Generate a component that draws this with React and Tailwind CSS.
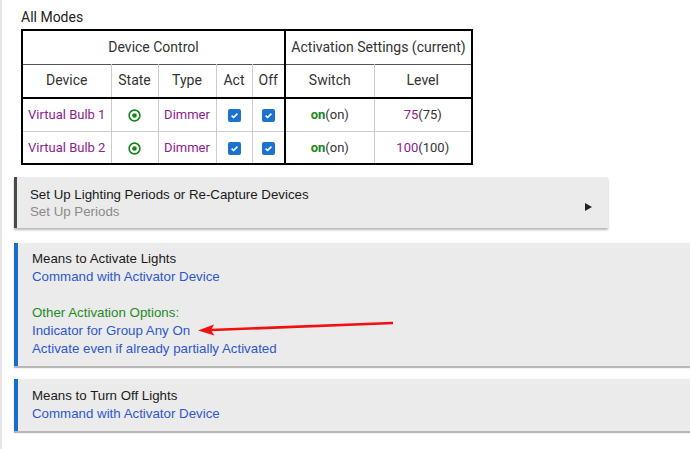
import React from "react";

const devices = [
  { name: "Virtual Bulb 1", level: "75" },
  { name: "Virtual Bulb 2", level: "100" },
];

const Radio = () => (
  <svg width="13" height="13" viewBox="0 0 13 13" className="inline-block">
    <circle cx="6.5" cy="6.5" r="5.4" fill="none" stroke="#15861a" strokeWidth="1.6" />
    <circle cx="6.5" cy="6.5" r="2.3" fill="#15861a" />
  </svg>
);

const Check = () => (
  <span className="inline-flex w-[13px] h-[13px] rounded-[2px] bg-[#1b72cf] items-center justify-center align-middle">
    <svg width="9" height="9" viewBox="0 0 9 9">
      <path d="M1.6 4.6 L3.6 6.5 L7.4 2.6" fill="none" stroke="#fff" strokeWidth="1.6" />
    </svg>
  </span>
);

const App = () => {
  return (
    <div className="w-[690px] h-[449px] bg-white border-l-2 border-[#e6e6e6] pl-3 pt-[8px] overflow-hidden">
      {/* Tabla de modos */}
      <div className="ml-[7px] font-['Roboto',sans-serif] text-[#222] text-[14px] leading-[18px]">
        All Modes
      </div>
      <table className="ml-[7px] mt-[3px] w-[450px] table-fixed border-collapse border-2 border-black font-['Roboto',sans-serif] text-[13px] text-[#333] text-center">
        <colgroup>
          <col className="w-[89px]" />
          <col className="w-[47px]" />
          <col className="w-[58px]" />
          <col className="w-[36px]" />
          <col className="w-[33px]" />
          <col className="w-[89px]" />
          <col className="w-[98px]" />
        </colgroup>
        <thead className="text-[14px]">
          <tr className="h-[34px] border-b border-[#555]">
            <th colSpan={5} className="font-normal">Device Control</th>
            <th colSpan={2} className="font-normal border-l-2 border-black whitespace-nowrap">
              Activation Settings (current)
            </th>
          </tr>
          <tr className="h-[34px] border-b-2 border-black">
            <th className="font-normal border-r border-[#ccc]">Device</th>
            <th className="font-normal border-r border-[#ccc]">State</th>
            <th className="font-normal border-r border-[#ccc]">Type</th>
            <th className="font-normal border-r border-[#ccc]">Act</th>
            <th className="font-normal">Off</th>
            <th className="font-normal border-l-2 border-black border-r border-r-[#ccc]">Switch</th>
            <th className="font-normal">Level</th>
          </tr>
        </thead>
        <tbody>
          {devices.map((d, i) => (
            <tr key={d.name} className={`h-[33px] ${i === 0 ? "border-b border-[#ccc]" : ""}`}>
              <td className="text-[#8e2190] border-r border-[#ccc]">{d.name}</td>
              <td className="border-r border-[#ccc]">
                <Radio />
              </td>
              <td className="text-[#8e2190] border-r border-[#ccc]">Dimmer</td>
              <td className="border-r border-[#ccc]">
                <Check />
              </td>
              <td>
                <Check />
              </td>
              <td className="border-l-2 border-black border-r border-r-[#ccc]">
                <span className="text-[#15861a] font-bold">on</span>(on)
              </td>
              <td>
                <span className="text-[#8e2190]">{d.level}</span>({d.level})
              </td>
            </tr>
          ))}
        </tbody>
      </table>

      {/* Paneles */}
      <div className="mt-[12px] flex flex-col font-['Liberation_Sans',Arial,sans-serif] text-[13.3px] leading-[17px]">
        <div className="w-[594px] bg-[#ebebeb] border-l-[3px] border-[#4a4a4a] pl-[13px] pr-4 pt-[9px] pb-[8px] shadow-[0_2px_2px_rgba(0,0,0,0.28)] flex items-center">
          <div className="flex-1">
            <div className="text-[#1a1a1a]">Set Up Lighting Periods or Re-Capture Devices</div>
            <div className="text-[#8a8a8a]">Set Up Periods</div>
          </div>
          <span className="mt-[8px] w-0 h-0 border-y-[4px] border-y-transparent border-l-[7px] border-l-[#222]" />
        </div>

        <div className="relative mt-[15px] w-[700px] bg-[#ebebeb] border-l-4 border-[#1a6dc9] pl-[14px] pt-[7px] pb-[8px] leading-[18px] shadow-[0_2px_1px_rgba(0,0,0,0.28)]">
          <div className="text-[#1a1a1a]">Means to Activate Lights</div>
          <div className="text-[#2d57cf]">Command with Activator Device</div>
          <div className="h-[18px]" />
          <div className="text-[#1f8a1f]">Other Activation Options:</div>
          <div className="text-[#2d57cf]">Indicator for Group Any On</div>
          <div className="text-[#2d57cf]">Activate even if already partially Activated</div>
          <svg
            className="absolute left-[179px] top-[74px]"
            width="200"
            height="20"
            viewBox="0 0 200 20"
          >
            <line x1="14" y1="13" x2="196" y2="6" stroke="#f01010" strokeWidth="2.6" />
            <path d="M1 13.5 L17 7.5 L14 13.2 L17.5 18.5 Z" fill="#f01010" />
          </svg>
        </div>

        <div className="mt-[13px] w-[700px] bg-[#ebebeb] border-l-4 border-[#1a6dc9] pl-[14px] pt-[8px] pb-[8px] leading-[18px] shadow-[0_2px_1px_rgba(0,0,0,0.28)]">
          <div className="text-[#1a1a1a]">Means to Turn Off Lights</div>
          <div className="text-[#2d57cf]">Command with Activator Device</div>
        </div>
      </div>
    </div>
  );
};

export default App;
